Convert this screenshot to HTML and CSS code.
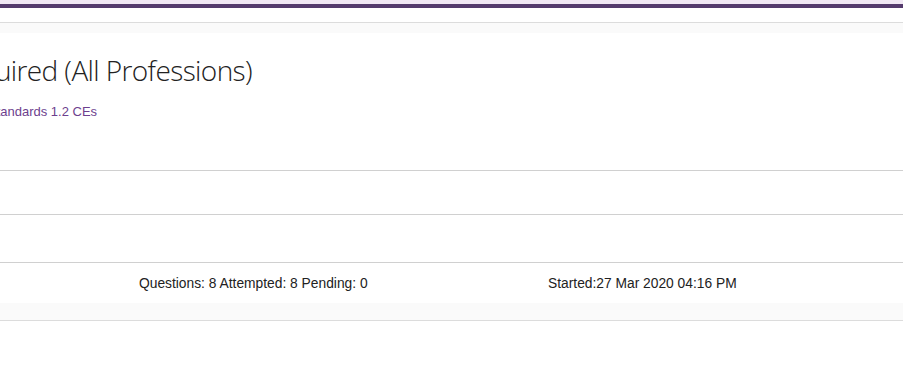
FILE: index.html
```html
<!DOCTYPE html>
<html>
<head>
  <meta charset="UTF-8">
  <title>Course Progress</title>
  <link rel="stylesheet" href="styles.css">
</head>
<body>
  <div class="topbar"></div>
  <div class="subnav"></div>
  <div class="crumb"></div>

  <div class="course">
    <h1 class="course-title">Required (All Professions)</h1>
    <a class="course-link" href="#">Standards 1.2 CEs</a>
  </div>

  <div class="row"></div>
  <div class="row row-tall"></div>

  <div class="stats">
    <span class="stat-questions">Questions: 8 Attempted: 8 Pending: 0</span>
    <span class="stat-started">Started:27 Mar 2020 04:16 PM</span>
  </div>
  <div class="stats-foot"></div>
</body>
</html>
```

FILE: styles.css
```css
* {
  margin: 0;
  padding: 0;
  box-sizing: border-box;
}

body {
  font-family: Arial, 'Liberation Sans', sans-serif;
  background: #fff;
  overflow: hidden;
}

.topbar {
  height: 8px;
  border-top: 4px solid #f1e8f4;
  background: #553b6d;
}

.subnav {
  height: 15px;
  border-bottom: 1px solid #dcdcdc;
}

.crumb {
  height: 10px;
  background: #fafafa;
}

.course {
  height: 138px;
  padding-top: 17px;
  border-bottom: 1px solid #d0d0d0;
}

.course-title {
  font-family: 'Open Sans', sans-serif;
  font-weight: 300;
  font-size: 28px;
  line-height: 40px;
  letter-spacing: -0.6px;
  color: #222;
  text-indent: -52px;
  white-space: nowrap;
}

.course-link {
  display: block;
  margin-top: 14px;
  font-size: 13px;
  color: #6d3f8e;
  text-decoration: none;
  text-indent: -12px;
  white-space: nowrap;
}

.row {
  height: 44px;
  border-bottom: 1px solid #d0d0d0;
}

.row-tall {
  height: 48px;
}

.stats {
  display: grid;
  grid-template-columns: 409px auto;
  padding: 13px 0 0 139px;
  height: 40px;
  font-size: 13.8px;
  color: #222;
}

.stats-foot {
  height: 18px;
  background: #fafafa;
  border-bottom: 1px solid #dcdcdc;
}
```
